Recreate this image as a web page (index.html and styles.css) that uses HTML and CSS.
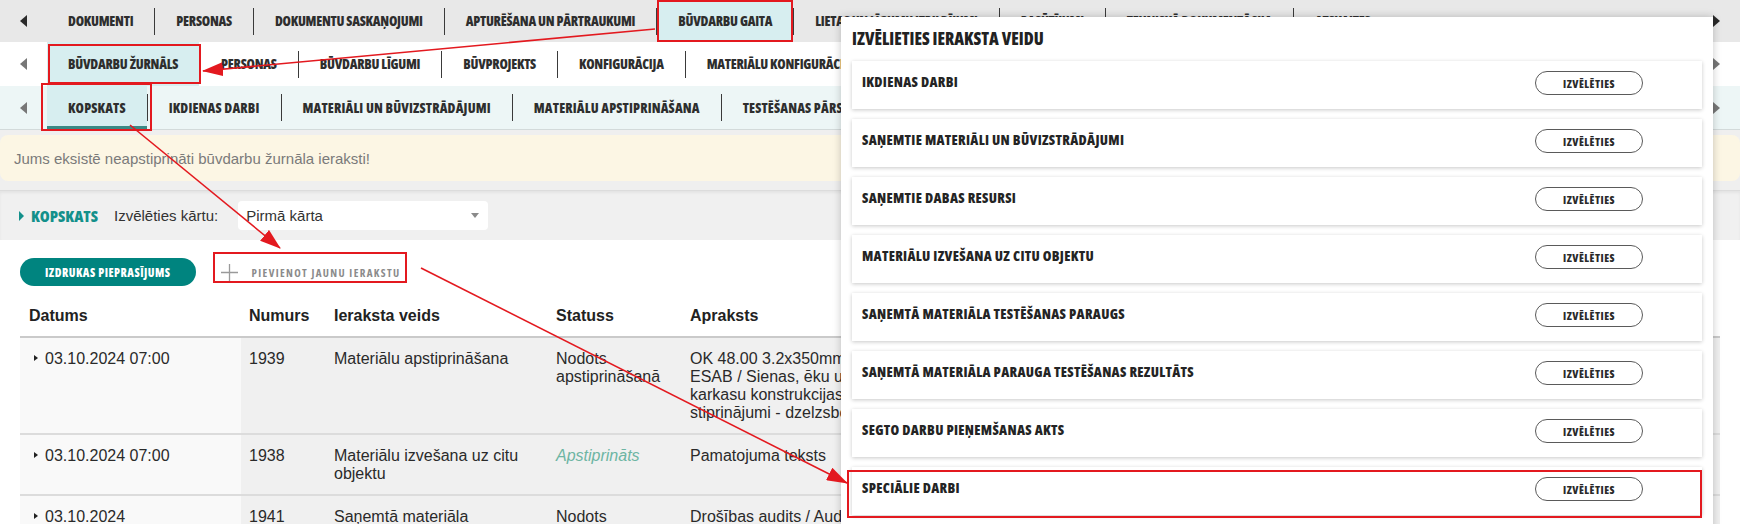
FILE: index.html
```html
<!DOCTYPE html>
<html lang="lv">
<head>
<meta charset="utf-8">
<title>Būvdarbu žurnāls — kopskats</title>
<link rel="stylesheet" href="styles.css">
</head>
<body>
<nav class="tabs tabs-1">
  <span class="arr arr-l"></span>
  <div class="items">
    <a class="item">DOKUMENTI</a><i class="sep"></i>
    <a class="item">PERSONAS</a><i class="sep"></i>
    <a class="item">DOKUMENTU SASKAŅOJUMI</a><i class="sep"></i>
    <a class="item">APTURĒŠANA UN PĀRTRAUKUMI</a><i class="sep"></i>
    <a class="item on">BŪVDARBU GAITA</a><i class="sep"></i>
    <a class="item">LIETAS UN LĪGUMU IZPILDĪJUMI</a><i class="sep"></i>
    <a class="item">PASŪTĪJUMI</a><i class="sep"></i>
    <a class="item">TEHNISKĀ DOKUMENTĀCIJA</a><i class="sep"></i>
    <a class="item">ATSKAITES</a>
  </div>
  <span class="arr arr-r"></span>
</nav>
<nav class="tabs tabs-2">
  <span class="arr arr-l"></span>
  <div class="items">
    <a class="item on">BŪVDARBU ŽURNĀLS</a><i class="sep"></i>
    <a class="item">PERSONAS</a><i class="sep"></i>
    <a class="item">BŪVDARBU LĪGUMI</a><i class="sep"></i>
    <a class="item">BŪVPROJEKTS</a><i class="sep"></i>
    <a class="item">KONFIGURĀCIJA</a><i class="sep"></i>
    <a class="item">MATERIĀLU KONFIGURĀCIJA</a><i class="sep"></i>
    <a class="item">IESTATĪJUMI</a>
  </div>
  <span class="arr arr-r"></span>
</nav>
<nav class="tabs tabs-3">
  <span class="arr arr-l"></span>
  <div class="items">
    <a class="item on">KOPSKATS</a><i class="sep"></i>
    <a class="item">IKDIENAS DARBI</a><i class="sep"></i>
    <a class="item">MATERIĀLI UN BŪVIZSTRĀDĀJUMI</a><i class="sep"></i>
    <a class="item">MATERIĀLU APSTIPRINĀŠANA</a><i class="sep"></i>
    <a class="item">TESTĒŠANAS PĀRSKATI</a><i class="sep"></i>
    <a class="item">SEGTIE DARBI</a>
  </div>
  <span class="arr arr-r"></span>
</nav>

<div class="notice-wrap">
  <div class="notice">Jums eksistē neapstiprināti būvdarbu žurnāla ieraksti!</div>
</div>

<div class="toolbar">
  <span class="tb-tri"></span>
  <span class="tb-title">KOPSKATS</span>
  <span class="tb-label">Izvēlēties kārtu:</span>
  <div class="select"><span>Pirmā kārta</span><i class="caret"></i></div>
</div>

<div class="actions">
  <a class="btn-print">IZDRUKAS PIEPRASĪJUMS</a>
  <a class="btn-add">
    <svg class="plus" width="17" height="17" viewBox="0 0 17 17"><path d="M8.5 0v17M0 8.5h17" stroke="#9a9a9a" stroke-width="1.3" fill="none"/></svg>
    <span>PIEVIENOT JAUNU IERAKSTU</span>
  </a>
</div>

<table class="grid">
  <colgroup>
    <col class="c1"><col class="c2"><col class="c3"><col class="c4"><col class="c5"><col class="c6">
  </colgroup>
  <thead>
    <tr><th>Datums</th><th>Numurs</th><th>Ieraksta veids</th><th>Statuss</th><th>Apraksts</th><th></th></tr>
  </thead>
  <tbody>
    <tr>
      <td class="d"><i class="tri"></i>03.10.2024 07:00</td>
      <td>1939</td>
      <td>Materiālu apstiprināšana</td>
      <td>Nodots apstiprināšanā</td>
      <td>OK 48.00 3.2x350mm ESAB / Sienas, ēku un karkasu konstrukcijas stiprinājumi - dzelzsbetons</td>
      <td></td>
    </tr>
    <tr>
      <td class="d"><i class="tri"></i>03.10.2024 07:00</td>
      <td>1938</td>
      <td>Materiālu izvešana uz citu objektu</td>
      <td class="ok">Apstiprināts</td>
      <td>Pamatojuma teksts</td>
      <td></td>
    </tr>
    <tr>
      <td class="d"><i class="tri"></i>03.10.2024</td>
      <td>1941</td>
      <td>Saņemtā materiāla testēšanas paraugs</td>
      <td>Nodots apstiprināšanā</td>
      <td>Drošības audits / Audita protokols</td>
      <td></td>
    </tr>
  </tbody>
</table>

<section class="modal">
  <h2 class="modal-title">IZVĒLIETIES IERAKSTA VEIDU</h2>
  <ul class="types">
    <li class="type"><span class="type-name">IKDIENAS DARBI</span><a class="pick">IZVĒLĒTIES</a></li>
    <li class="type"><span class="type-name">SAŅEMTIE MATERIĀLI UN BŪVIZSTRĀDĀJUMI</span><a class="pick">IZVĒLĒTIES</a></li>
    <li class="type"><span class="type-name">SAŅEMTIE DABAS RESURSI</span><a class="pick">IZVĒLĒTIES</a></li>
    <li class="type"><span class="type-name">MATERIĀLU IZVEŠANA UZ CITU OBJEKTU</span><a class="pick">IZVĒLĒTIES</a></li>
    <li class="type"><span class="type-name">SAŅEMTĀ MATERIĀLA TESTĒŠANAS PARAUGS</span><a class="pick">IZVĒLĒTIES</a></li>
    <li class="type"><span class="type-name">SAŅEMTĀ MATERIĀLA PARAUGA TESTĒŠANAS REZULTĀTS</span><a class="pick">IZVĒLĒTIES</a></li>
    <li class="type"><span class="type-name">SEGTO DARBU PIEŅEMŠANAS AKTS</span><a class="pick">IZVĒLĒTIES</a></li>
    <li class="type"><span class="type-name">SPECIĀLIE DARBI</span><a class="pick">IZVĒLĒTIES</a></li>
  </ul>
</section>

<svg class="marks" width="1740" height="524" viewBox="0 0 1740 524">
  <defs>
    <marker id="ah" markerUnits="userSpaceOnUse" markerWidth="22" markerHeight="14" refX="20" refY="7" orient="auto">
      <path d="M0 0L21 7L0 14Z" fill="#e3191f"/>
    </marker>
  </defs>
  <g fill="none" stroke="#e3191f" stroke-width="2">
    <rect x="658" y="1" width="134" height="40"/>
    <rect x="49" y="45" width="151" height="38"/>
    <rect x="42" y="84" width="109" height="46"/>
    <rect x="214" y="253" width="192" height="29"/>
    <rect x="848" y="471" width="853" height="46"/>
    <path d="M655 29L203 71" stroke-width="1.6" marker-end="url(#ah)"/>
    <path d="M130 125L280 248" stroke-width="1.6" marker-end="url(#ah)"/>
    <path d="M421 268L847 483" stroke-width="1.6" marker-end="url(#ah)"/>
  </g>
</svg>
</body>
</html>
```
FILE: styles.css
```css
* { box-sizing: border-box; }
html, body { margin: 0; padding: 0; }
body {
  width: 1740px;
  height: 524px;
  overflow: hidden;
  position: relative;
  background: #fff;
  font-family: "Liberation Sans", Arial, sans-serif;
  color: #333;
}
a { text-decoration: none; color: inherit; }

/* ---------- tab rows ---------- */
.tabs { display: flex; align-items: stretch; }
.tabs-1 { height: 42px; background: #e8e8e8; }
.tabs-2 { height: 44px; background: #fff; }
.tabs-3 {
  height: 44px;
  background: #edf6f6;
  border-bottom: 1px solid #d3dada;
  box-shadow: 0 2px 3px rgba(0,0,0,.07);
}
.arr { width: 47px; flex: none; display: flex; align-items: center; justify-content: center; }
.arr::before { content: ""; border-style: solid; width: 0; height: 0; }
.arr-l::before { border-width: 6px 7px 6px 0; border-color: transparent #2a2a2a transparent transparent; }
.arr-r::before { border-width: 6px 0 6px 7px; border-color: transparent transparent transparent #2a2a2a; }
.tabs-2 .arr-l::before, .tabs-3 .arr-l::before { border-right-color: #777; }
.tabs-2 .arr-r::before, .tabs-3 .arr-r::before { border-left-color: #777; }

.items { flex: 1; min-width: 0; display: flex; align-items: center; overflow: hidden; }
.item {
  flex: none;
  align-self: stretch;
  display: flex;
  align-items: center;
  padding: 0 21px;
  font-family: "Open Sans", sans-serif;
  font-stretch: 75%;
  font-weight: 800;
  font-size: 13.5px;
  letter-spacing: -0.25px;
  color: #2e2e2e;
  white-space: nowrap;
}
.tabs-3 .item { letter-spacing: 0.15px; }
.item.on { background: #d7eef0; }
.tabs-3 .item.on { box-shadow: inset 0 -3px 0 #3a8985; }
.sep { flex: none; width: 1px; height: 27px; background: #3a3a3a; }

/* ---------- notice ---------- */
.notice-wrap { background: #efefef; padding: 5px 0 9px; }
.notice {
  height: 46px;
  display: flex;
  align-items: center;
  padding-left: 14px;
  background: #fcf6e4;
  border-radius: 8px;
  font-size: 15px;
  color: #7a7a7a;
}

/* ---------- toolbar ---------- */
.toolbar {
  height: 50px;
  display: flex;
  align-items: center;
  padding-left: 19px;
  background: #f0f0f0;
  border-top: 1px solid #dcdcdc;
  box-shadow: inset 0 2px 3px rgba(0,0,0,.05);
}
.tb-tri {
  width: 0; height: 0;
  border-style: solid;
  border-width: 5px 0 5px 5px;
  border-color: transparent transparent transparent #13908b;
  margin-right: 7px;
}
.tb-title {
  font-family: "Open Sans", sans-serif;
  font-stretch: 75%;
  font-weight: 800;
  font-size: 16px;
  color: #13908b;
  margin-right: 16px;
}
.tb-label { font-size: 15px; color: #333; margin-right: 20px; }
.select {
  width: 250px;
  height: 29px;
  background: #fff;
  border-radius: 4px;
  display: flex;
  align-items: center;
  justify-content: space-between;
  padding: 0 9px 0 8px;
  font-size: 15px;
  color: #333;
}
.caret {
  width: 0; height: 0;
  border-style: solid;
  border-width: 5px 4px 0 4px;
  border-color: #8a8a8a transparent transparent transparent;
}

/* ---------- actions ---------- */
.actions {
  display: flex;
  align-items: center;
  padding: 17px 20px 9px;
}
.btn-print {
  height: 28px;
  padding: 0 25px;
  border-radius: 14px;
  background: #00847f;
  color: #fff;
  display: flex;
  align-items: center;
  font-family: "Open Sans", sans-serif;
  font-stretch: 75%;
  font-weight: 800;
  font-size: 11.5px;
  letter-spacing: 0.5px;
}
.btn-add {
  margin-left: 21px;
  height: 30px;
  display: flex;
  align-items: center;
  padding-left: 4px;
  color: #8b8b8b;
  font-family: "Open Sans", sans-serif;
  font-stretch: 75%;
  font-weight: 700;
  font-size: 11px;
  letter-spacing: 1.35px;
}
.btn-add .plus { margin-right: 14px; }

/* ---------- table ---------- */
.grid {
  width: 1700px;
  margin: 0 20px;
  border-collapse: collapse;
  table-layout: fixed;
}
.c1 { width: 221px; }
.c2 { width: 85px; }
.c3 { width: 222px; }
.c4 { width: 134px; }
.c5 { width: 210px; }
.grid th {
  text-align: left;
  font-size: 16px;
  font-weight: 700;
  color: #222;
  padding: 10px 8px;
  line-height: 20px;
  border-bottom: 2px solid #cacaca;
}
.grid th:first-child { padding-left: 9px; }
.grid td {
  vertical-align: top;
  font-size: 16px;
  line-height: 18px;
  color: #2a2a2a;
  background: #f0f0f0;
  padding: 12px 8px 11px;
  border-bottom: 2px solid #dcdcdc;
}
.grid td:nth-child(3) { padding-right: 16px; }
.grid td.d { background: #f9f9f9; padding-left: 14px; }
.tri {
  display: inline-block;
  width: 0; height: 0;
  border-style: solid;
  border-width: 3.5px 0 3.5px 4px;
  border-color: transparent transparent transparent #222;
  margin-right: 7px;
  vertical-align: 3px;
}
.grid td.ok { color: #6db5a3; font-style: italic; }

/* ---------- modal ---------- */
.modal {
  position: absolute;
  left: 841px;
  top: 17px;
  width: 872px;
  height: 540px;
  background: #fff;
  box-shadow: 0 0 8px rgba(0,0,0,.22);
  padding: 10px 11px 0;
}
.modal-title {
  margin: 0 0 10px;
  line-height: 24px;
  font-family: "Open Sans", sans-serif;
  font-stretch: 75%;
  font-weight: 800;
  font-size: 17px;
  color: #222;
}
.types { list-style: none; margin: 0; padding: 0; display: flex; flex-direction: column; gap: 10px; }
.type {
  height: 48px;
  display: flex;
  align-items: center;
  justify-content: space-between;
  padding: 0 59px 4px 10px;
  background: #fff;
  box-shadow: 0 1px 4px rgba(0,0,0,.22);
}
.type-name {
  margin-bottom: 4px;
  font-family: "Open Sans", sans-serif;
  font-stretch: 75%;
  font-weight: 800;
  font-size: 14px;
  letter-spacing: 0.3px;
  color: #242424;
}
.pick {
  width: 108px;
  height: 24px;
  border: 1px solid #5a5a5a;
  border-radius: 12px;
  display: flex;
  align-items: center;
  justify-content: center;
  font-family: "Open Sans", sans-serif;
  font-stretch: 75%;
  font-weight: 800;
  font-size: 11px;
  letter-spacing: 0.5px;
  color: #2a2a2a;
}

/* ---------- annotations ---------- */
.marks { position: absolute; left: 0; top: 0; pointer-events: none; }
```
